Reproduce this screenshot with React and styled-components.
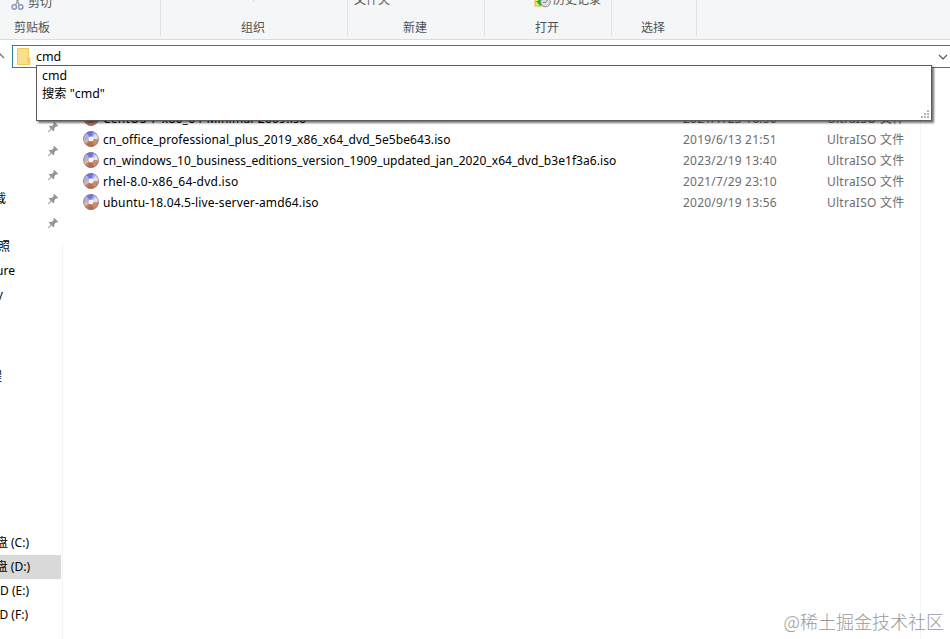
import styled, { createGlobalStyle } from "styled-components";

const drives = [
  { text: "", pinned: true },
  { text: "", pinned: true },
  { text: "", pinned: true },
  { text: "下载", edge: 6, pinned: true },
  { text: "", pinned: true },
  { text: "照", edge: 10 },
  { text: "Picture", edge: 15 },
  { text: "My", edge: 3 },
  { text: "程", edge: 2, gap: 58 },
  { text: "磁盘 (C:)", edge: 29, gap: 142 },
  { text: "磁盘 (D:)", edge: 30, active: true },
  { text: "HDD (E:)", edge: 29 },
  { text: "HDD (F:)", edge: 28 },
];

const files = [
  {
    name: "CentOS-7-x86_64-Minimal-2009.iso",
    date: "2021/7/23 16:56",
    spacing: 0.24,
  },
  {
    name: "cn_office_professional_plus_2019_x86_x64_dvd_5e5be643.iso",
    date: "2019/6/13 21:51",
    spacing: 0.08,
  },
  {
    name: "cn_windows_10_business_editions_version_1909_updated_jan_2020_x64_dvd_b3e1f3a6.iso",
    date: "2023/2/19 13:40",
    spacing: 0.06,
  },
  { name: "rhel-8.0-x86_64-dvd.iso", date: "2021/7/29 23:10", spacing: 0.23 },
  {
    name: "ubuntu-18.04.5-live-server-amd64.iso",
    date: "2020/9/19 13:56",
    spacing: 0.15,
  },
];

function ScissorsIcon() {
  return (
    <svg width="13" height="16" viewBox="0 0 13 16" fill="none">
      <path d="M3 0L8.5 10M10 0L4.500 10" stroke="#9a9ea6" strokeWidth="1.400" />
      <circle cx="3.300" cy="12" r="2.200" stroke="#8c9abb" strokeWidth="1.500" />
      <circle cx="9.700" cy="12" r="2.200" stroke="#8c9abb" strokeWidth="1.500" />
    </svg>
  );
}

function HistoryIcon() {
  return (
    <svg width="17" height="16" viewBox="0 0 17 16">
      <rect x="1" y="2" width="9" height="12" fill="#fbe36a" stroke="#d9b93c" />
      <path d="M4 3h4v6h3l-5 5-4-5h2z" fill="#2fae35" />
      <circle cx="11.500" cy="10" r="4.800" fill="#dcdfe0" stroke="#8b9194" />
      <path d="M11.500 10.500l3-4M11.500 10.500H9" stroke="#83898c" fill="none" />
    </svg>
  );
}

function FolderIcon() {
  return (
    <svg width="14" height="17" viewBox="0 0 14 17">
      <path d="M.5.5h11v8l1.500 2v6H.5z" fill="#fbe08a" stroke="#ecc965" />
      <path d="M11 9v6.500" stroke="#e6bd55" />
    </svg>
  );
}

function PinIcon() {
  return (
    <svg width="12" height="12" viewBox="0 0 12 12">
      <path
        d="M7 .8L11.200 4.800 10.300 5.500 9.300 5.200 7.300 7.200 7.400 9.500 6.400 10.200 4.500 8.300 1.300 11.200.8 10.700 3.700 7.500 1.800 5.600 2.600 4.700 4.900 4.900 6.800 2.900 6.300 1.600z"
        fill="#8f9599"
      />
    </svg>
  );
}

function Disc() {
  return (
    <DiscIcon width="16" height="16" viewBox="0 0 16 16">
      <circle cx="8" cy="8" r="7.700" fill="#b98872" />
      <path d="M8 8L.4 8.500A7.600 7.600 0 0 1 4 1.500z" fill="#b3b0e0" />
      <path d="M8 8L3.500 1.800A7.600 7.600 0 0 1 11 .9z" fill="#6f74ea" />
      <path d="M8 8L10.500.8A7.600 7.600 0 0 1 13.500 2.800z" fill="#a9b4f5" />
      <path d="M8 8L13 2.400A7.600 7.600 0 0 1 15.600 8.500z" fill="#dfe0f2" />
      <path d="M8 8L.4 8.500A7.600 7.600 0 0 0 2 12.500z" fill="#d8bcb2" />
      <path d="M8 8L4 14.500A7.600 7.600 0 0 0 11.500 14.800z" fill="#b96f4b" />
      <path d="M8 8L11.500 14.800A7.600 7.600 0 0 0 15.600 8.500z" fill="#c98e70" />
      <circle
        cx="8"
        cy="8"
        r="7.400"
        fill="none"
        stroke="#7d5f6c"
        strokeOpacity=".55"
        strokeWidth=".8"
      />
      <circle cx="8" cy="8" r="2.400" fill="#fff" />
      <circle cx="8" cy="8" r=".8" fill="#d9d6e4" />
    </DiscIcon>
  );
}

function SizeGrip() {
  return (
    <svg width="8" height="8" viewBox="0 0 8 8" fill="#b4b4b4">
      <path d="M6 0h2v2H6zM3 3h2v2H3zM6 3h2v2H6zM0 6h2v2H0zM3 6h2v2H3zM6 6h2v2H6z" />
    </svg>
  );
}

export default function App() {
  return (
    <Window>
      <GlobalStyle />
      <Ribbon>
        <Group $width={161}>
          <Command $indent={11} $top={-6}>
            <ScissorsIcon />
            <span>剪切</span>
          </Command>
          <GroupLabel $shift={-96}>剪贴板</GroupLabel>
        </Group>
        <Group $width={187}>
          <Tick />
          <GroupLabel>组织</GroupLabel>
        </Group>
        <Group $width={137}>
          <Command $indent={6} $top={-9}>
            文件夹
          </Command>
          <GroupLabel>新建</GroupLabel>
        </Group>
        <Group $width={127}>
          <Command $indent={49} $top={-9} $gap={2}>
            <HistoryIcon />
            <span>历史记录</span>
          </Command>
          <GroupLabel>打开</GroupLabel>
        </Group>
        <Group $width={85}>
          <GroupLabel>选择</GroupLabel>
        </Group>
      </Ribbon>

      <AddressRow>
        <UpArrow width="5" height="8" viewBox="0 0 5 8">
          <path d="M-2 6L0 2l4 4" stroke="#777" strokeWidth="1.300" fill="none" />
        </UpArrow>
        <AddressBar>
          <FolderIcon />
          <AddressText>cmd</AddressText>
          <svg width="10" height="6" viewBox="0 0 10 6">
            <path d="M1 1l4 4 4-4" stroke="#555" strokeWidth="1.200" fill="none" />
          </svg>
        </AddressBar>
        <Suggestions>
          <Suggestion>cmd</Suggestion>
          <Suggestion>搜索 "cmd"</Suggestion>
          <Grip>
            <SizeGrip />
          </Grip>
        </Suggestions>
      </AddressRow>

      <Body>
        <Sidebar>
          {drives.map((d, i) => (
            <SidebarItem key={i} $gap={d.gap} $active={d.active}>
              <SidebarText $edge={d.edge}>{d.text}</SidebarText>
              {d.pinned && <PinIcon />}
            </SidebarItem>
          ))}
        </Sidebar>
        <Divider />
        <FileList>
          {files.map((f) => (
            <FileRow key={f.name}>
              <Disc />
              <FileName $spacing={f.spacing}>{f.name}</FileName>
              <FileDate>{f.date}</FileDate>
              <FileType>UltraISO 文件</FileType>
            </FileRow>
          ))}
        </FileList>
      </Body>
      <Watermark>@稀土掘金技术社区</Watermark>
    </Window>
  );
}

const GlobalStyle = createGlobalStyle`
  body {
    margin: 0;
    overflow: hidden;
  }
  svg {
    display: block;
    flex-shrink: 0;
  }
`;
const Window = styled.div`
  position: relative;
  display: flex;
  flex-direction: column;
  width: 950px;
  height: 639px;
  overflow: hidden;
  background: #fff;
  color: #000;
  font-family: "Noto Sans", "Noto Sans CJK SC", sans-serif;
  font-size: 12px;
  line-height: 18px;
  white-space: nowrap;
`;
const Ribbon = styled.div`
  display: flex;
  height: 39px;
  flex-shrink: 0;
  background: #f5f6f7;
  border-bottom: 1px solid #dadbdc;
`;
const Group = styled.div`
  display: flex;
  flex-direction: column;
  box-sizing: border-box;
  width: ${(p) => p.$width}px;
  height: 36px;
  border-right: 1px solid #e2e3e4;
`;
const Command = styled.div`
  display: flex;
  align-items: center;
  gap: ${(p) => p.$gap ?? 4}px;
  margin: ${(p) => p.$top}px 0 0 ${(p) => p.$indent}px;
  color: #55585c;
`;
const Tick = styled.div`
  width: 1px;
  height: 2px;
  margin-left: 92px;
  background: #dcdddf;
`;
const GroupLabel = styled.div`
  margin: auto 0 -1px ${(p) => p.$shift ?? -2}px;
  text-align: center;
  color: #505154;
`;
const AddressRow = styled.div`
  position: relative;
  display: flex;
  padding-top: 5px;
  height: 23px;
  flex-shrink: 0;
`;
const UpArrow = styled.svg`
  margin: 7px 7px 0 0;
`;
const AddressBar = styled.div`
  display: flex;
  align-items: center;
  flex: 1;
  box-sizing: border-box;
  height: 23px;
  padding: 0 2px 0 4px;
  border: 1px solid #2f7c99;
  border-right: none;
`;
const AddressText = styled.span`
  flex: 1;
  margin-left: 5px;
  font-size: 12.4px;
`;
const Suggestions = styled.div`
  position: absolute;
  z-index: 1;
  left: 36px;
  top: 25px;
  box-sizing: border-box;
  width: 896px;
  height: 56px;
  padding: 1px 5px;
  background: #fff;
  border: 1px solid #5c5c5c;
  box-shadow: 2px 2px 2px rgba(0, 0, 0, 0.55);
`;
const Suggestion = styled.div`
  height: 18px;
  font-size: 12.3px;
`;
const Grip = styled.div`
  position: absolute;
  right: 2px;
  bottom: 2px;
`;
const Body = styled.div`
  display: flex;
  flex: 1;
  min-height: 0;
`;
const Sidebar = styled.div`
  width: 61px;
  padding-top: 47px;
  flex-shrink: 0;
`;
const SidebarItem = styled.div`
  display: flex;
  align-items: center;
  justify-content: space-between;
  height: 24px;
  margin-top: ${(p) => p.$gap ?? 0}px;
  padding-right: 2px;
  background: ${(p) => (p.$active ? "#d9d9d9" : "transparent")};
`;
const SidebarText = styled.div`
  display: flex;
  justify-content: flex-end;
  width: ${(p) => p.$edge ?? 0}px;
`;
const Divider = styled.div`
  width: 1px;
  margin: 175px 0 0 1px;
  background: #f4f4f4;
`;
const FileList = styled.div`
  box-sizing: border-box;
  width: 858px;
  padding: 40px 0 0 20px;
  border-right: 1px solid #f6f6f6;
`;
const FileRow = styled.div`
  display: flex;
  align-items: center;
  height: 21px;
`;
const DiscIcon = styled.svg`
  margin-bottom: 1px;
`;
const FileName = styled.div`
  width: 580px;
  margin-left: 4px;
  letter-spacing: ${(p) => p.$spacing}px;
`;
const FileDate = styled.div`
  width: 144px;
  color: #6d6d6d;
  letter-spacing: 0.2px;
`;
const FileType = styled.div`
  color: #6d6d6d;
  letter-spacing: 0.24px;
`;
const Watermark = styled.div`
  position: absolute;
  right: 6px;
  bottom: 5px;
  color: #999;
  font-family: "Noto Sans CJK SC", sans-serif;
  font-size: 18px;
  font-weight: 300;
  line-height: 26px;
`;
